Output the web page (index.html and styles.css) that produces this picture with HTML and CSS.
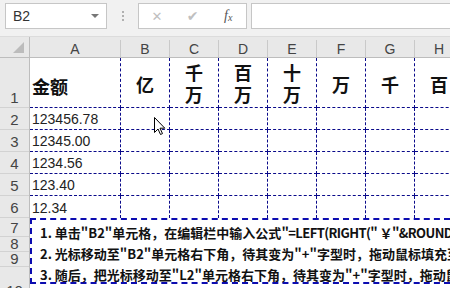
FILE: index.html
```html
<!DOCTYPE html>
<html lang="zh-CN">
<head>
<meta charset="UTF-8" />
<title>金额大写拆分</title>
<link rel="stylesheet" href="styles.css">
</head>
<body>

<div class="toolbar">
  <div class="namebox">
    <span>B2</span>
    <span class="drop"></span>
  </div>
  <div class="grip"><i></i><i></i><i></i></div>
  <div class="fbtns">
    <span class="btn x">&#x2715;</span>
    <span class="btn ok">&#x2714;</span>
    <span class="btn fx">f<sub>x</sub></span>
  </div>
  <div class="fbar"></div>
</div>

<div class="sheet">
  <div class="rowhead">
    <div class="corner"><span class="tri"></span></div>
    <div class="rn r1">1</div>
    <div class="rn">2</div>
    <div class="rn">3</div>
    <div class="rn">4</div>
    <div class="rn">5</div>
    <div class="rn">6</div>
    <div class="rn r7">7</div>
    <div class="rn r8">8</div>
    <div class="rn r9">9</div>
    <div class="rn r10">10</div>
  </div>

  <div class="area">
    <div class="colhead">
      <div>A</div><div>B</div><div>C</div><div>D</div>
      <div>E</div><div>F</div><div>G</div><div>H</div>
    </div>

    <div class="cells">
      <div class="c head left">金额</div>
      <div class="c head">亿</div>
      <div class="c head two">千<br>万</div>
      <div class="c head two">百<br>万</div>
      <div class="c head two">十<br>万</div>
      <div class="c head">万</div>
      <div class="c head">千</div>
      <div class="c head">百</div>

      <div class="c num">123456.78</div>
      <div class="c"></div><div class="c"></div><div class="c"></div><div class="c"></div><div class="c"></div><div class="c"></div><div class="c"></div>

      <div class="c num">12345.00</div>
      <div class="c"></div><div class="c"></div><div class="c"></div><div class="c"></div><div class="c"></div><div class="c"></div><div class="c"></div>

      <div class="c num">1234.56</div>
      <div class="c"></div><div class="c"></div><div class="c"></div><div class="c"></div><div class="c"></div><div class="c"></div><div class="c"></div>

      <div class="c num">123.40</div>
      <div class="c"></div><div class="c"></div><div class="c"></div><div class="c"></div><div class="c"></div><div class="c"></div><div class="c"></div>

      <div class="c num last">12.34</div>
      <div class="c last"></div><div class="c last"></div><div class="c last"></div><div class="c last"></div><div class="c last"></div><div class="c last"></div><div class="c last"></div>
    </div>

    <div class="note">
      <p>1. 单击"B2"单元格，在编辑栏中输入公式<span class="f">"=LEFT(RIGHT(" ￥"&amp;ROUND($A2,2)*100,12-COLUMN(B:B)+1))"</span></p>
      <p>2. 光标移动至"B2"单元格右下角，待其变为"+"字型时，拖动鼠标填充至"K2"单元格</p>
      <p>3. 随后，把光标移动至"L2"单元格右下角，待其变为"+"字型时，拖动鼠标向下填充</p>
    </div>
  </div>

  <svg class="cursor" width="12" height="19" viewBox="0 0 12 19">
    <path d="M0.5 0.5 L0.5 15.5 L4 12 L6.5 17.5 L8.5 16.6 L6 11.2 L10.8 11.2 Z" fill="#fff" stroke="#000" stroke-width="1" stroke-linejoin="miter"/>
  </svg>
</div>

</body>
</html>
```

FILE: styles.css
```css
html, body {
  margin: 0;
  padding: 0;
}
body {
  width: 450px;
  height: 288px;
  overflow: hidden;
  background: #fff;
  font-family: "Liberation Sans", Arial, sans-serif;
  color: #222;
}

/* barra de fórmulas */
.toolbar {
  height: 37px;
  background: #f1f1f1;
  display: flex;
  align-items: flex-start;
  padding-top: 3px;
  box-sizing: border-box;
  border-bottom: 1px solid #dcdcdc;
}
.namebox {
  margin-left: 5px;
  width: 102px;
  height: 26px;
  box-sizing: border-box;
  background: #fff;
  border: 1px solid #c6c6c6;
  display: flex;
  align-items: center;
  justify-content: space-between;
  padding: 0 7px 0 7px;
  font-size: 14px;
  color: #333;
}
.drop {
  width: 0;
  height: 0;
  border-left: 4px solid transparent;
  border-right: 4px solid transparent;
  border-top: 4px solid #777;
}
.grip {
  width: 31px;
  height: 26px;
  display: flex;
  flex-direction: column;
  align-items: center;
  justify-content: center;
  gap: 2px;
}
.grip i {
  width: 2px;
  height: 2px;
  background: #b0b0b0;
}
.fbtns {
  width: 109px;
  height: 26px;
  box-sizing: border-box;
  background: #fff;
  border: 1px solid #c6c6c6;
  display: flex;
  align-items: center;
}
.btn {
  width: 36px;
  text-align: center;
  color: #c0c0c0;
  font-size: 14px;
  font-family: "DejaVu Sans", sans-serif;
}
.btn.x { font-size: 13px; }
.btn.fx {
  color: #555;
  font-family: "Liberation Serif", serif;
  font-style: italic;
  font-size: 14px;
}
.btn.fx sub {
  font-size: 10px;
  vertical-align: -1px;
}
.fbar {
  margin-left: 4px;
  flex: 1;
  height: 26px;
  box-sizing: border-box;
  background: #fff;
  border: 1px solid #c6c6c6;
  border-right: none;
}

/* hoja */
.sheet {
  position: relative;
  display: flex;
  background: #fff;
}
.rowhead {
  width: 30px;
  flex: none;
  background: #e8e8e8;
  border-right: 1px solid #bdbdbd;
  box-sizing: border-box;
}
.corner {
  height: 21px;
  box-sizing: border-box;
  border-bottom: 1px solid #bdbdbd;
  position: relative;
}
.tri {
  position: absolute;
  right: 5px;
  bottom: 4px;
  width: 0;
  height: 0;
  border-left: 11px solid transparent;
  border-bottom: 11px solid #bcbcbc;
}
.rn {
  height: 22px;
  box-sizing: border-box;
  border-bottom: 1px solid #d2d2d2;
  text-align: center;
  font-size: 15px;
  line-height: 15px;
  color: #444;
  display: flex;
  align-items: flex-end;
  justify-content: center;
  padding-bottom: 2px;
}
.rn.r1 { height: 50px; }
.rn.r7 { height: 19px; padding-bottom: 1px; }
.rn.r8 { height: 15px; padding-bottom: 0; }
.rn.r9 { height: 15px; padding-bottom: 0; }
.rn.r10 { height: 30px; align-items: flex-start; padding-top: 16px; border-bottom: none; }

.area {
  flex: none;
}
.colhead {
  display: grid;
  grid-template-columns: 91px repeat(7, 49px);
  height: 21px;
  background: #e8e8e8;
  border-bottom: 1px solid #bdbdbd;
  box-sizing: border-box;
}
.colhead div {
  border-right: 1px solid #c9c9c9;
  text-align: center;
  font-size: 14px;
  color: #444;
  margin-top: 3px;
  padding-top: 2px;
  line-height: 15px;
}

.cells {
  display: grid;
  grid-template-columns: 91px repeat(7, 49px);
  grid-template-rows: 50px repeat(5, 22px);
}
.c {
  box-sizing: border-box;
  border-right: 1px dashed #0a0a8a;
  border-bottom: 1px dashed #0a0a8a;
}
.c.last {
  border-bottom: none;
}
.c.head {
  font-family: "Noto Sans CJK SC", sans-serif;
  font-weight: bold;
  font-size: 18px;
  color: #111;
  display: flex;
  align-items: center;
  justify-content: center;
  text-align: center;
  padding-top: 3px;
}
.c.head.left {
  justify-content: flex-start;
  padding-left: 2px;
  padding-top: 7px;
}
.c.head.two {
  line-height: 22px;
  padding-top: 1px;
}
.c.num {
  font-size: 14px;
  color: #222;
  padding-left: 2px;
  display: flex;
  align-items: flex-end;
  padding-bottom: 2px;
}

.note {
  width: 420px;
  height: 66px;
  box-sizing: border-box;
  border-top: 2px dashed #0c0cb0;
  border-left: 2px dashed #0c0cb0;
  border-bottom: 2px dashed #0c0cb0;
  padding: 2px 0 0 8px;
  font-family: "Noto Sans CJK SC", sans-serif;
  font-weight: bold;
  font-size: 13px;
  color: #111;
  white-space: nowrap;
}
.note p {
  margin: 0;
  line-height: 21px;
}
.note .f {
  letter-spacing: -0.6px;
}

.cursor {
  position: absolute;
  left: 154px;
  top: 80px;
}
```
